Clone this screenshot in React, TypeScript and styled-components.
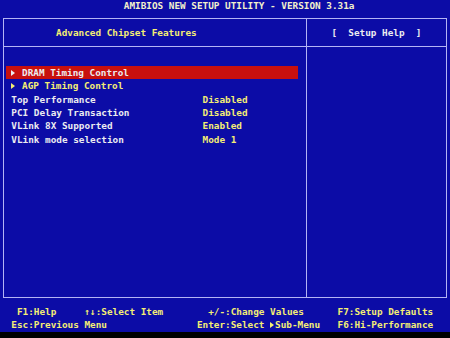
import styled, { createGlobalStyle } from 'styled-components';

const CELL = 5.625;
const ROW = 13.33;

const BLUE = '#0c0ca6';
const LINE = '#b4b4f4';
const YELLOW = '#f4ee74';
const WHITE = '#ececf0';

const GlobalStyle = createGlobalStyle`
  html, body {
    margin: 0;
    padding: 0;
    background: #000;
  }
  body {
    font-family: "DejaVu Sans Mono", "Liberation Mono", monospace;
    font-weight: bold;
    font-size: 9.35px;
  }
`;

const Screen = styled.div`
  width: 450px;
  height: 338px;
  background: ${BLUE};
  display: flex;
  flex-direction: column;
  overflow: hidden;
`;

const Title = styled.div`
  height: 18px;
  line-height: 11px;
  padding-left: ${22 * CELL}px;
  color: #f2f0cc;
  white-space: pre;
`;

const Frame = styled.div`
  box-sizing: border-box;
  margin-left: 3px;
  width: 444px;
  height: 280px;
  border: 1px solid ${LINE};
  display: grid;
  grid-template-columns: 302px 1fr;
  grid-template-rows: 28px 1fr;
`;

const HeaderCell = styled.div<{ $help?: boolean }>`
  box-sizing: border-box;
  border-bottom: 1px solid ${LINE};
  border-left: ${(p) => (p.$help ? `1px solid ${LINE}` : 'none')};
  display: flex;
  align-items: center;
  justify-content: ${(p) => (p.$help ? 'center' : 'flex-start')};
  padding-left: ${(p) => (p.$help ? 0 : 52)}px;
  color: ${(p) => (p.$help ? WHITE : YELLOW)};
  white-space: pre;
`;

const Body = styled.div`
  padding: 19px 0 0 2px;
`;

const HelpBody = styled.div`
  border-left: 1px solid ${LINE};
`;

const Row = styled.div<{ $selected?: boolean }>`
  width: 292px;
  box-sizing: border-box;
  height: ${ROW}px;
  line-height: ${ROW}px;
  padding-left: 5.25px;
  display: grid;
  grid-template-columns: ${34 * CELL}px auto;
  background: ${(p) => (p.$selected ? '#c8100e' : 'transparent')};
  white-space: pre;
`;

const Label = styled.span<{ $color: string }>`
  display: flex;
  align-items: center;
  color: ${(p) => p.$color};
`;

const Value = styled.span`
  color: ${YELLOW};
`;

const Arrow = styled.span<{ $color: string }>`
  display: inline-block;
  width: 0;
  height: 0;
  border-top: 3.5px solid transparent;
  border-bottom: 3.5px solid transparent;
  border-left: 4.5px solid ${(p) => p.$color};
  margin-right: ${2 * CELL - 4.5}px;
`;

const Footer = styled.div`
  padding-top: 7px;
  display: grid;
  grid-template-columns: repeat(80, ${CELL}px);
  grid-auto-rows: ${ROW}px;
  line-height: ${ROW}px;
  color: ${YELLOW};
`;

const Key = styled.span<{ $col: number; $row: number }>`
  grid-column-start: ${(p) => p.$col + 1};
  grid-row: ${(p) => p.$row};
  white-space: pre;
  display: flex;
  align-items: center;
`;

const SmallArrow = styled.span`
  display: inline-block;
  width: 0;
  height: 0;
  border-top: 3.5px solid transparent;
  border-bottom: 3.5px solid transparent;
  border-left: 4.5px solid ${YELLOW};
  margin: 0 1.1px 0 0;
`;

const Overscan = styled.div`
  flex: 1;
  background: #000;
`;

interface Item {
  label: string;
  value?: string;
  submenu?: boolean;
}

const items: Item[] = [
  { label: 'DRAM Timing Control', submenu: true },
  { label: 'AGP Timing Control', submenu: true },
  { label: 'Top Performance', value: 'Disabled' },
  { label: 'PCI Delay Transaction', value: 'Disabled' },
  { label: 'VLink 8X Supported', value: 'Enabled' },
  { label: 'VLink mode selection', value: 'Mode 1' },
];

export default function App() {
  return (
    <Screen>
      <GlobalStyle />
      <Title>AMIBIOS NEW SETUP UTILITY - VERSION 3.31a</Title>
      <Frame>
        <HeaderCell>Advanced Chipset Features</HeaderCell>
        <HeaderCell $help>{'[  Setup Help  ]'}</HeaderCell>
        <Body>
          {items.map((item, i) => {
            const selected = i === 0;
            const color = selected ? WHITE : item.submenu ? YELLOW : WHITE;
            return (
              <Row key={item.label} $selected={selected}>
                <Label $color={color}>
                  {item.submenu && <Arrow $color={color} />}
                  {item.label}
                </Label>
                {item.value && <Value>{item.value}</Value>}
              </Row>
            );
          })}
        </Body>
        <HelpBody />
      </Frame>
      <Footer>
        <Key $col={3} $row={1}>F1:Help</Key>
        <Key $col={15} $row={1}>↑↓:Select Item</Key>
        <Key $col={37} $row={1}>+/-:Change Values</Key>
        <Key $col={60} $row={1}>F7:Setup Defaults</Key>
        <Key $col={2} $row={2}>Esc:Previous Menu</Key>
        <Key $col={35} $row={2}>
          Enter:Select <SmallArrow />Sub-Menu
        </Key>
        <Key $col={60} $row={2}>F6:Hi-Performance</Key>
      </Footer>
      <Overscan />
    </Screen>
  );
}
